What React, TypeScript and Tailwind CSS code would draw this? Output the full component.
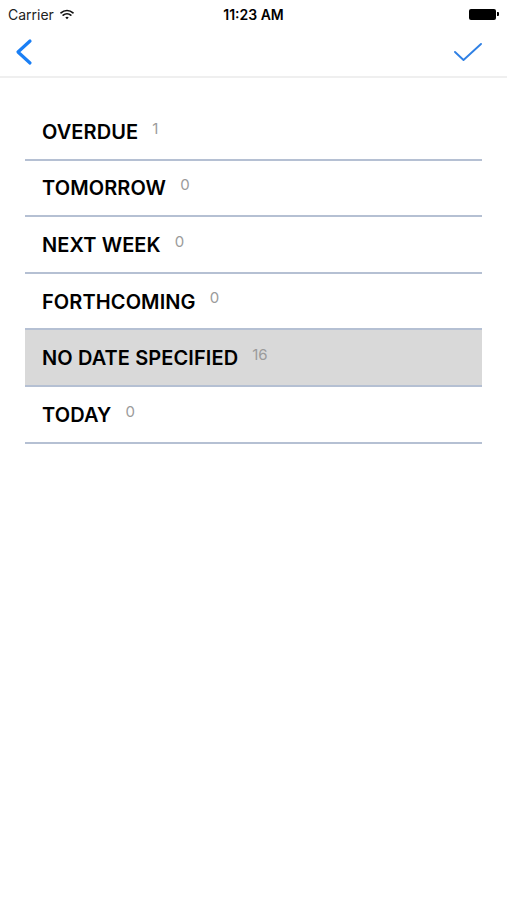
const rows = [
  { label: 'OVERDUE', count: 1 },
  { label: 'TOMORROW', count: 0 },
  { label: 'NEXT WEEK', count: 0 },
  { label: 'FORTHCOMING', count: 0 },
  { label: 'NO DATE SPECIFIED', count: 16, selected: true },
  { label: 'TODAY', count: 0 },
];

const App = () => {
  return (
    <div className="w-[507px] h-[900px] bg-white font-['Inter',sans-serif] text-black">
      {/* status bar */}
      <div className="relative h-[28px] flex items-center justify-between pl-[8px] pr-[8px]">
        <div className="flex items-center gap-[6px] text-[14px] text-[#222]">
          <span>Carrier</span>
          <svg width="14" height="11" viewBox="0 0 14 11">
            <path d="M1 3.8a9 9 0 0 1 12 0" stroke="#111" strokeWidth="1.7" fill="none" strokeLinecap="round" />
            <path d="M3.2 6.2a5.8 5.8 0 0 1 7.6 0" stroke="#111" strokeWidth="1.7" fill="none" strokeLinecap="round" />
            <path d="M5.3 8.5l1.7 1.8 1.7-1.8a2.6 2.6 0 0 0-3.4 0z" fill="#111" />
          </svg>
        </div>
        <span className="absolute left-1/2 -translate-x-1/2 text-[14px] font-semibold">11:23 AM</span>
        <div className="flex items-center gap-[1px]">
          <div className="w-[27px] h-[11px] bg-black rounded-[2px]" />
          <div className="w-[2px] h-[4px] bg-black rounded-r-[1px]" />
        </div>
      </div>

      {/* nav bar */}
      <div className="h-[50px] flex items-center justify-between pl-[14px] pr-[25px] border-b-2 border-[#efefef]">
        <svg width="20" height="28" viewBox="0 0 20 28">
          <path d="M16 3L4 14l12 11" stroke="#1a7ff5" strokeWidth="3.2" fill="none" strokeLinecap="round" strokeLinejoin="round" />
        </svg>
        <svg width="28" height="18" viewBox="0 0 28 18">
          <path d="M1 9l8.5 8L27 1" stroke="#2f80e4" strokeWidth="1.9" fill="none" strokeLinecap="round" strokeLinejoin="round" />
        </svg>
      </div>

      {/* list */}
      <div className="mx-[25px] mt-[26px] flex flex-col">
        {rows.map((r) => (
          <div
            key={r.label}
            className={
              'h-[56.6px] flex items-center pl-[17px] border-b-2 border-[#b5c0d3] ' +
              (r.selected ? 'bg-[#d9d9d9]' : '')
            }
          >
            <span className="text-[20px] font-semibold tracking-[0.1px] pt-[1px]">{r.label}</span>
            <span className="ml-[14px] -mt-[5px] text-[15px] text-[#9b9b9b]">{r.count}</span>
          </div>
        ))}
      </div>
    </div>
  );
};

export default App;
